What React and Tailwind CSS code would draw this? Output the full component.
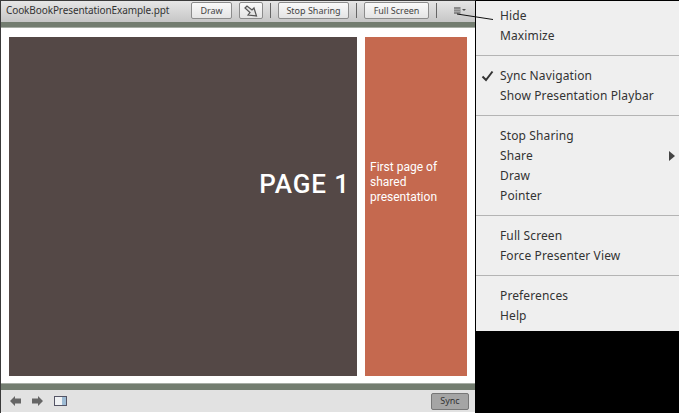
const sans = { fontFamily: '"Noto Sans", sans-serif' };
const slideFont = { fontFamily: 'Roboto, sans-serif' };

function Btn({ children, className = "" }) {
  return (
    <div className={`h-[17px] flex items-center justify-center rounded-[2px] border border-[#8c8c8c] bg-gradient-to-b from-[#fafafa] to-[#e4e4e4] text-[9px] text-[#444] ${className}`}>
      {children}
    </div>
  );
}

const Sep = () => <div className="w-px h-[15px] bg-[#666]" />;

function Group({ items, className = "" }) {
  return (
    <div className={`flex flex-col pl-[24px] ${className}`}>
      {items.map((t) => (
        <div key={t} className="h-[20px] flex items-center text-[12px] tracking-[0.12px] text-[#333] relative">
          {t === "Sync Navigation" && (
            <svg className="absolute left-[-19px] top-[4px]" width="13" height="12" viewBox="0 0 13 12">
              <path d="M1.5 6.5 L5 10 L11.5 1.5" fill="none" stroke="#333" strokeWidth="2" />
            </svg>
          )}
          {t}
          {t === "Share" && <div className="absolute right-[4px] top-[5px] w-0 h-0 border-y-[5px] border-y-transparent border-l-[6px] border-l-[#444]" />}
        </div>
      ))}
    </div>
  );
}

const line = "border-b border-[#b4b4b4]";

export default function App() {
  return (
    <div style={sans} className="relative w-[679px] h-[413px] bg-black flex overflow-hidden">
      <div className="w-[476px] h-full flex flex-col border-l border-t border-r border-l-[#3a3a3a] border-t-[#3a3a3a] border-r-black bg-white">
        <div className="h-[21px] shrink-0 bg-gradient-to-b from-[#e6e6e6] to-[#c6c6c6] pl-[5px] pt-px">
          <div className="h-[17px] flex items-center">
            <span className="w-[185px] text-[10px] tracking-[-0.1px] text-[#333] whitespace-nowrap">CookBookPresentationExample.ppt</span>
            <Btn className="w-[41px]">Draw</Btn>
            <Btn className="w-[24px] ml-[7px]">
              <svg width="14" height="12" viewBox="0 0 14 12">
                <path d="M1 3 L3 1 L8 5 L10 3 L12.5 11 L4 10 L6 7.5 Z" fill="#e4e4e4" stroke="#555" strokeWidth="1.2" />
              </svg>
            </Btn>
            <div className="ml-[7px]"><Sep /></div>
            <Btn className="w-[71px] ml-[7px]">Stop Sharing</Btn>
            <div className="ml-[7px]"><Sep /></div>
            <Btn className="w-[65px] ml-[7px]">Full Screen</Btn>
            <div className="ml-[7px]"><Sep /></div>
            <svg className="ml-[17px]" width="12" height="7" viewBox="0 0 12 7">
              <rect x="0" y="0" width="6.5" height="7" fill="#8a8a8a" />
              <path d="M0 2.5h6.5M0 4.5h6.5" stroke="#b0b0b0" strokeWidth="0.7" />
              <path d="M8 2h4l-2 2z" fill="#555" />
            </svg>
          </div>
        </div>
        <div className="h-[6px] shrink-0 bg-[#737d70] border-b border-[#a8aea6]" />
        <div className="flex-1 flex px-[8px] pt-[9px] pb-[7px] gap-[8px] bg-white">
          <div className="w-[348px] bg-[#544846] flex items-center justify-end pr-[7px]">
            <span style={slideFont} className="text-[26px] font-medium text-white tracking-[0.9px] mt-[-45px]">PAGE 1</span>
          </div>
          <div className="w-[102px] bg-[#c5694f] pl-[5px] pt-[123px]">
            <div style={slideFont} className="text-[12px] font-normal leading-[15px] text-white">
              First page of<br />shared<br />presentation
            </div>
          </div>
        </div>
        <div className="h-[7px] shrink-0 bg-[#737d70] border-t border-[#a8aea6]" />
        <div className="h-[22px] shrink-0 bg-[#e2e2e2] flex items-center pl-[9px] pr-[6px] mb-px">
          <svg width="11" height="10" viewBox="0 0 11 10"><path d="M0 5 L5 0 V2.5 H11 V7.5 H5 V10 Z" fill="#666" /></svg>
          <svg className="ml-[11px]" width="11" height="10" viewBox="0 0 11 10"><path d="M11 5 L6 0 V2.5 H0 V7.5 H6 V10 Z" fill="#666" /></svg>
          <svg className="ml-[11px]" width="13" height="10" viewBox="0 0 13 10">
            <rect x="0.5" y="0.5" width="12" height="9" fill="#f0f2f4" stroke="#556" />
            <rect x="8" y="1" width="4" height="8" fill="#9dbbd4" />
          </svg>
          <div className="ml-auto w-[38px] h-[17px] rounded-[2px] bg-[#a5a5a5] border border-[#777] flex items-center justify-center text-[9px] text-[#333]">Sync</div>
        </div>
      </div>
      <div className="w-[203px] h-[331px] bg-[#efefef] border-t border-black flex flex-col">
        <Group items={["Hide", "Maximize"]} className={`h-[55px] pt-[5px] ${line}`} />
        <Group items={["Sync Navigation", "Show Presentation Playbar"]} className={`h-[60px] pt-[10px] ${line}`} />
        <Group items={["Stop Sharing", "Share", "Draw", "Pointer"]} className={`h-[100px] pt-[10px] ${line}`} />
        <Group items={["Full Screen", "Force Presenter View"]} className={`h-[60px] pt-[10px] ${line}`} />
        <Group items={["Preferences", "Help"]} className="h-[55px] pt-[10px]" />
      </div>
      <svg className="absolute left-[450px] top-[10px]" width="50" height="14" viewBox="0 0 50 14">
        <path d="M7 4 L43 9.5" stroke="#111" strokeWidth="1" />
      </svg>
    </div>
  );
}
